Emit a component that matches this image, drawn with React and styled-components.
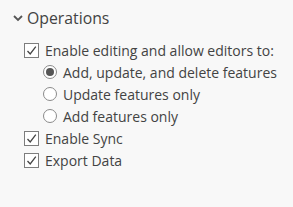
import styled, { createGlobalStyle } from 'styled-components';

const Global = createGlobalStyle`
  body {
    margin: 0;
    background: #f8f8f8;
    font-family: "Open Sans", "Noto Sans", sans-serif;
    color: #434343;
  }
`

const Panel = styled.div`
  padding: 8px 0 0 13px;
`

const Header = styled.div`
  display: flex;
  align-items: center;
  gap: 4px;
  font-size: 15.8px;
  height: 20px;
  margin-bottom: 11px;
`

const List = styled.div`
  display: flex;
  flex-direction: column;
  padding-left: 11px;
`

const Row = styled.label`
  display: flex;
  align-items: center;
  gap: 6px;
  height: 22px;
  font-size: 14px;
  white-space: nowrap;
  padding-left: ${p => p.indent || 0}px;
`

const Box = styled.span`
  flex: none;
  width: 15px;
  height: 15px;
  box-sizing: border-box;
  border: 1px solid #7d7d7d;
  background: #fff;
  display: flex;
  align-items: center;
  justify-content: center;
`

const Circle = styled.span`
  flex: none;
  width: 14px;
  height: 14px;
  box-sizing: border-box;
  border-radius: 50%;
  border: 1px solid #8a8a8a;
  background: #fff;
  display: flex;
  align-items: center;
  justify-content: center;

  &::after {
    content: "";
    width: 8px;
    height: 8px;
    border-radius: 50%;
    background: ${p => (p.on ? '#555' : 'transparent')};
  }
`

const Chevron = () => (
  <svg width="10" height="10" viewBox="0 0 10 10">
    <path d="M1 3 L5 7 L9 3" fill="none" stroke="#555" strokeWidth="1.8" />
  </svg>
)

const Check = () => (
  <svg width="13" height="13" viewBox="0 0 13 13">
    <path d="M2.5 7 L5.2 10 L10.8 2.6" fill="none" stroke="#444" strokeWidth="1.3" />
  </svg>
)

const CheckRow = ({ children }) => (
  <Row>
    <Box><Check /></Box>
    {children}
  </Row>
)

const RadioRow = ({ children, on }) => (
  <Row indent={19}>
    <Circle on={on} />
    {children}
  </Row>
)

export default function App() {
  return (
    <Panel>
      <Global />
      <Header>
        <Chevron />
        Operations
      </Header>
      <List>
        <CheckRow>Enable editing and allow editors to:</CheckRow>
        <RadioRow on>Add, update, and delete features</RadioRow>
        <RadioRow>Update features only</RadioRow>
        <RadioRow>Add features only</RadioRow>
        <CheckRow>Enable Sync</CheckRow>
        <CheckRow>Export Data</CheckRow>
      </List>
    </Panel>
  );
}
